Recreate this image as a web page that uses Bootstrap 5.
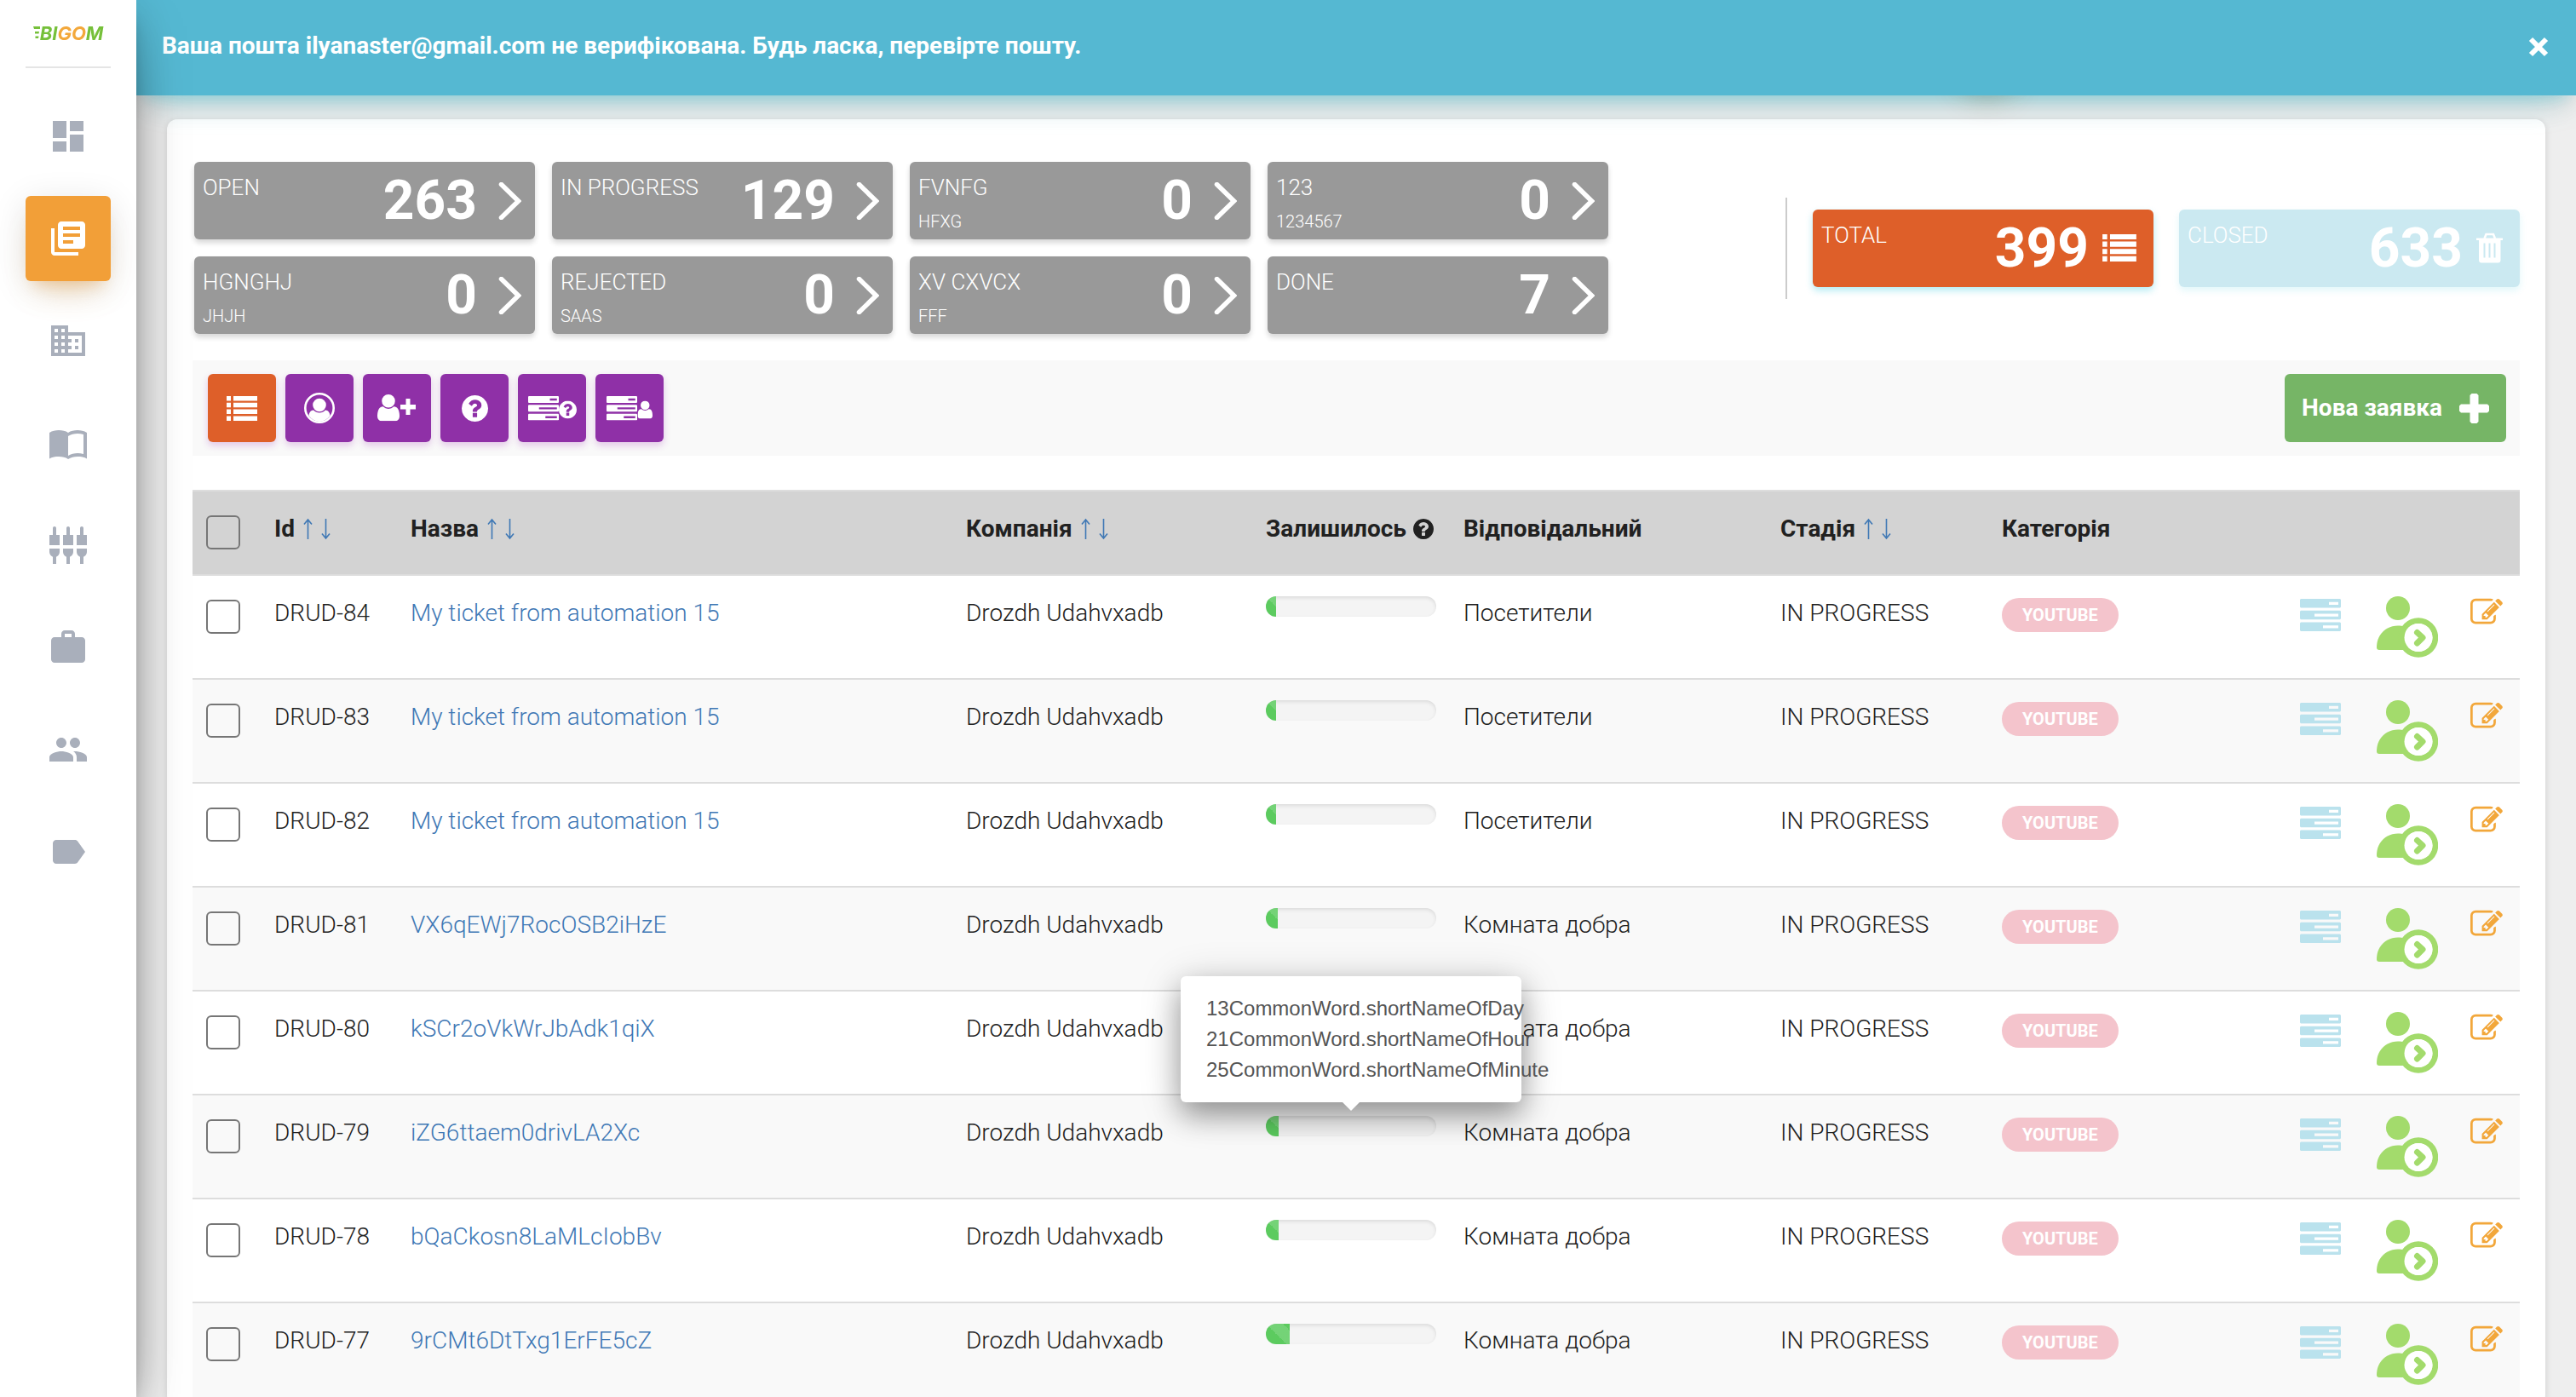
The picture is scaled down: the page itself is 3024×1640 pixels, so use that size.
<!DOCTYPE html>
<html lang="uk">
<head>
<meta charset="utf-8">
<meta name="viewport" content="width=device-width, initial-scale=1">
<title>Bigom</title>
<link href="https://cdn.jsdelivr.net/npm/bootstrap@5.3.0/dist/css/bootstrap.min.css" rel="stylesheet">
<style>
body{font-family:Roboto,"Liberation Sans",sans-serif;font-size:28px;line-height:40px;font-weight:300;color:#212121;background:#eee}
a{text-decoration:none;color:#3f78b5}
svg{display:block;flex:none;fill:currentColor}
.side-menu{width:160px;z-index:1040;background:#fff;box-shadow:0 32px 76px -24px rgba(0,0,0,.56),0 8px 50px rgba(0,0,0,.16),0 16px 20px -8px rgba(0,0,0,.26)}
.brand-link{width:100px;height:80px;border-bottom:2px solid #e5e5e5;color:#76c03a;font:italic 700 22px/22px Inter,Roboto,sans-serif}
.brand-link .warm{color:#f3a83b}
.side-list{gap:20px;padding-top:30px}
.side-list a{width:100px;height:100px;border-radius:6px;color:#a9afbb}
.side-list a.current{background:#f29f38;color:#fff;box-shadow:0 24px 40px -20px rgba(242,159,56,.4),0 8px 40px rgba(0,0,0,.12),0 14px 16px -10px rgba(242,159,56,.3)}
.page-area{margin-left:160px;padding:140px 36px 0}
.mail-note{left:160px;z-index:1030;padding:33px 30px 37px;background:#55b8d2;color:#fff;font-weight:700;line-height:42px;box-shadow:0 24px 40px -20px rgba(0,188,212,.28),0 8px 40px rgba(0,0,0,.12),0 14px 16px -10px rgba(0,188,212,.2)}
.mail-note::before{content:"";position:absolute;z-index:-1;right:656px;bottom:0;width:70px;height:60px;border-radius:30px;box-shadow:0 4px 32px rgba(90,70,20,.25)}
.note-fill{position:absolute;inset:0;z-index:-1;background:#55b8d2}
.plain-btn{border:0;background:none;padding:0;color:#fff}
.panel-card{border-radius:12px;background:#fff;padding:50px 30px 0;box-shadow:0 2px 8px rgba(0,0,0,.14)}
.stat-area{padding-left:2px}
.stat-grid{display:grid;grid-template-columns:repeat(4,400px);gap:20px}
.stat-box{width:400px;height:91px;border-radius:6px;background:#999;color:#fff;padding:0 16px 0 10px;box-shadow:0 4px 6px rgba(0,0,0,.16)}
.stat-box:hover{color:#fff}
.stat-name{padding-top:14px;gap:12px;font-size:26px;line-height:32px}
.stat-note{font-size:20px;line-height:24px}
.stat-num{font-size:64px;line-height:91px;font-weight:700;gap:16px}
.stat-box.total{background:#de5f29;box-shadow:0 4px 8px rgba(0,188,212,.3)}
.stat-box.closed{background:#cbe9f1;box-shadow:0 4px 8px rgba(0,188,212,.12)}
.sum-area{height:119px;border-left:2px solid #ccc;padding-left:30px;gap:30px}
.tool-strip{margin-top:31px;padding:16px 16px 16px 18px;background:#f9f9f9}
.tool-btns{gap:11px}
.tool-btn{width:80px;height:80px;border:0;border-radius:6px;padding:0;background:#8f30a7;color:#fff;box-shadow:0 4px 8px rgba(156,39,176,.24)}
.tool-btn.on{background:#de5f29}
.new-btn{height:80px;border:0;border-radius:6px;padding:0 20px;gap:20px;background:#76b566;color:#fff;font-weight:700}
.ticket-table{margin:40px 0 0;width:100%;table-layout:fixed;border-collapse:separate;border-spacing:0}
.ticket-table th,.ticket-table td{padding:24px 0 24px 16px;border-top:2px solid #ddd;vertical-align:top;white-space:nowrap}
.ticket-table th{background:#d3d3d3;font-weight:700}
.ticket-table tbody tr:nth-child(even) td{background:#f9f9f9}
.c-check{width:80px}.c-id{width:160px}.c-comp{width:352px}.c-left{width:232px}.c-resp{width:372px}.c-stage{width:260px}.c-cat{width:350px}.c-act{width:274px}
.tick{appearance:none;display:block;width:40px;height:40px;margin:4px 0 5px;border:2px solid #767676;border-radius:6px;background:transparent}
.sorts{gap:10px}
.tag-pill{display:inline-block;height:40px;margin-top:2px;padding:0 24px;border-radius:20px;background:#f4c4cc;color:#fff;font-size:20px;line-height:40px;font-weight:700;vertical-align:top}
.time-wrap{width:200px}
.time-bar{height:24px;border-radius:12px;background:#f4f4f4;box-shadow:inset 0 2px 4px rgba(0,0,0,.1)}
.time-bar .progress-bar{background-color:#5ccb5f;background-size:40px 40px}
.acts{gap:38px}
.hint-box{position:absolute;z-index:5;left:-100px;bottom:40px;width:400px;padding:20px 30px;border-radius:6px;background:#fff;color:#555;font:400 24px/36px "Liberation Sans",sans-serif;box-shadow:0 16px 32px rgba(0,0,0,.3),0 8px 50px rgba(0,0,0,.2)}
.hint-box::after{content:"";position:absolute;left:190px;top:100%;border:10px solid transparent;border-top-color:#fff;border-bottom:0}
</style>
<script src="https://cdn.jsdelivr.net/npm/bootstrap@5.3.0/dist/js/bootstrap.bundle.min.js"></script>
</head>
<body class="vh-100 overflow-hidden">

<svg width="0" height="0" class="position-absolute" aria-hidden="true">
  <symbol id="i-chev" viewBox="0 0 36 44"><path d="M12.500 2.500L32.500 22 12.500 41.500" fill="none" stroke="currentColor" stroke-width="5.500" stroke-linecap="round"/></symbol>
  <symbol id="i-list" viewBox="0 0 36 29"><path d="M0 0h5v5.500H0zM8 0h28v5.500H8zM0 7.800h5v5.500H0zM8 7.800h28v5.500H8zM0 15.600h5v5.500H0zM8 15.600h28v5.500H8zM0 23.400h5v5.500H0zM8 23.400h28v5.500H8z"/></symbol>
  <symbol id="i-quest" viewBox="128 128 1536 1536"><path d="M1024 1376v-192q0-14-9-23t-23-9h-192q-14 0-23 9t-9 23v192q0 14 9 23t23 9h192q14 0 23-9t9-23zm256-672q0-88-55.500-163t-138.500-116-170.500-41q-243 0-371 213-15 24 8 42l132 100q7 6 19 6 16 0 25-12 53-68 86-92 34-24 86-24 48 0 85.500 26t37.500 59q0 38-20 61t-68 45q-63 28-115.500 86.500t-52.500 125.500v36q0 14 9 23t23 9h192q14 0 23-9t9-23q0-19 21.500-49.500t54.500-49.500q32-18 49-28.500t46-35 44.500-48 28-60.500 12.500-81zm384 192q0 209-103 385.500t-279.500 279.500-385.500 103-385.500-103-279.500-279.500-103-385.500 103-385.500 279.500-279.500 385.500-103 385.500 103 279.500 279.500 103 385.500z"/></symbol>
  <symbol id="i-user" viewBox="256 128 1280 1536"><path d="M1536 1399q0 109-62.500 187t-150.500 78h-854q-88 0-150.500-78t-62.500-187q0-85 8.500-160.500t31.500-152 58.500-131 94-89 134.500-34.500q131 128 313 128t313-128q76 0 134.500 34.500t94 89 58.500 131 31.500 152 8.500 160.500zm-256-887q0 159-112.500 271.500t-271.500 112.500-271.500-112.500-112.500-271.500 112.500-271.500 271.500-112.500 271.500 112.500 112.500 271.500z"/></symbol>
  <symbol id="i-tasks" viewBox="0 0 48 38"><path fill-rule="evenodd" d="M1 0h46l1 1v8.500l-1 1H1l-1-1V1zM34 3.700v3.300h11V3.700zM1 13.800h46l1 1v8.500l-1 1H1l-1-1v-8.500zM17 17.500v3.300h28v-3.300zM1 27.500h46l1 1V37l-1 1H1l-1-1v-8.500zM27 31.200v3.300h18v-3.300z"/></symbol>
  <symbol id="i-assign" viewBox="0 0 72 72"><circle cx="25" cy="14" r="14"/><path d="M3 63Q0 63 0 60C0 45 11 34.500 25 34.500c3 0 5 .3 7.500 1L38 60l-4 3z"/><path fill-rule="evenodd" d="M49 25.300a23.200 23.200 0 1 1 0 46.400 23.200 23.200 0 0 1 0-46.400zm0 6.700a16.500 16.500 0 1 0 0 33 16.500 16.500 0 0 0 0-33z"/><circle cx="49" cy="48.500" r="16.500" fill="#fff"/><path d="M47.500 42.500l6.500 6-6.500 6.500" fill="none" stroke="currentColor" stroke-width="7" stroke-linecap="round" stroke-linejoin="round"/></symbol>
  <symbol id="i-edit" viewBox="0 0 1792 1792"><path d="M888 1184l116-116-152-152-116 116v56h96v96h56zm440-720q-16-16-33 1l-350 350q-17 17-1 33t33-1l350-350q17-17 1-33zm80 594v190q0 119-84.500 203.500t-203.500 84.500h-832q-119 0-203.500-84.500t-84.500-203.500v-832q0-119 84.500-203.500t203.500-84.500h832q63 0 117 25 15 7 18 23 3 17-9 29l-49 49q-14 14-32 8-23-6-45-6h-832q-66 0-113 47t-47 113v832q0 66 47 113t113 47h832q66 0 113-47t47-113v-126q0-13 9-22l64-64q15-15 35-7t20 29zm-96-738l288 288-672 672h-288v-288zm444 132l-92 92-288-288 92-92q28-28 68-28t68 28l152 152q28 28 28 68t-28 68z"/></symbol>
  <symbol id="i-up" viewBox="0 0 11 26"><path d="M5.500 25V2M1 7.500L5.500 2 10 7.500" fill="none" stroke="currentColor" stroke-width="1.600"/></symbol>
  <symbol id="i-down" viewBox="0 0 11 26"><path d="M5.500 1v23M1 18.500L5.500 24 10 18.500" fill="none" stroke="currentColor" stroke-width="1.600"/></symbol>
</svg>

<aside class="side-menu position-fixed top-0 start-0 vh-100 d-flex flex-column align-items-center">
  <a href="#" class="brand-link d-flex align-items-center justify-content-center" aria-label="Bigom">
    <svg width="8" height="18" viewBox="0 0 8 18"><path d="M0 1h10l-1 3H1zM2 7h5l-.5 2.500H2zM2.500 12.500h4L6 15H2.500z"/></svg>
    <span>B<span>I</span><span class="warm">GO</span>M</span>
  </a>
  <nav class="side-list d-flex flex-column">
    <a href="#" class="d-flex align-items-center justify-content-center" aria-label="Панель"><svg width="48" height="48" viewBox="0 0 24 24"><path d="M3 13h8V3H3v10zm0 8h8v-6H3v6zm10 0h8V11h-8v10zm0-18v6h8V3h-8z"/></svg></a>
    <a href="#" class="current d-flex align-items-center justify-content-center" aria-label="Заявки"><svg width="48" height="48" viewBox="0 0 24 24"><path d="M4 6H2v14c0 1.100.9 2 2 2h14v-2H4V6zm16-4H8c-1.100 0-2 .9-2 2v12c0 1.100.9 2 2 2h12c1.100 0 2-.9 2-2V4c0-1.100-.9-2-2-2zm-1 9H9V9h10v2zm-4 4H9v-2h6v2zm4-8H9V5h10v2z"/></svg></a>
    <a href="#" class="d-flex align-items-center justify-content-center" aria-label="Компанії"><svg width="48" height="48" viewBox="0 0 24 24"><path d="M12 7V3H2v18h20V7H12zM6 19H4v-2h2v2zm0-4H4v-2h2v2zm0-4H4V9h2v2zm0-4H4V5h2v2zm4 12H8v-2h2v2zm0-4H8v-2h2v2zm0-4H8V9h2v2zm0-4H8V5h2v2zm10 12h-8v-2h2v-2h-2v-2h2v-2h-2V9h8v10zm-2-8h-2v2h2v-2zm0 4h-2v2h2v-2z"/></svg></a>
    <a href="#" class="d-flex align-items-center justify-content-center" aria-label="База знань"><svg width="48" height="48" viewBox="0 0 24 24"><path fill-rule="evenodd" d="M12 6C10.500 4.900 8.500 4.500 6.500 4.500S2.700 4.900 1 6v15.200C2.500 20.300 4.500 20 6.500 20s4 .4 5.500 1.500c1.500-1 3.500-1.500 5.500-1.500s4 .3 5.500 1.200V6c-1.700-1.100-3.500-1.500-5.500-1.500S13.500 4.900 12 6zm0 2c1.400-1 3.600-1.500 5.500-1.500 1.200 0 2.400.15 3.500.5v11.500c-1.100-.35-2.300-.5-3.500-.5-1.700 0-4.150.65-5.500 1.500z"/></svg></a>
    <a href="#" class="d-flex align-items-center justify-content-center" aria-label="Інтеграції"><svg width="48" height="48" viewBox="0 0 24 24"><path d="M5 2c0-.55-.45-1-1-1s-1 .45-1 1v4H1v6h6V6H5V2zm4 14c0 1.300.84 2.400 2 2.820V23h2v-4.180c1.160-.41 2-1.510 2-2.820v-2H9v2zm-8 0c0 1.300.84 2.400 2 2.820V23h2v-4.180C6.160 18.400 7 17.300 7 16v-2H1v2zM21 6V2c0-.55-.45-1-1-1s-1 .45-1 1v4h-2v6h6V6h-2zm-8-4c0-.55-.45-1-1-1s-1 .45-1 1v4H9v6h6V6h-2V2zm4 14c0 1.300.84 2.400 2 2.820V23h2v-4.180c1.160-.41 2-1.510 2-2.820v-2h-6v2z"/></svg></a>
    <a href="#" class="d-flex align-items-center justify-content-center" aria-label="Робота"><svg width="48" height="48" viewBox="0 0 24 24"><path d="M20 6h-4V4c0-1.110-.89-2-2-2h-4c-1.110 0-2 .89-2 2v2H4c-1.110 0-1.990.89-1.990 2L2 19c0 1.110.89 2 2 2h16c1.110 0 2-.89 2-2V8c0-1.110-.89-2-2-2zm-6 0h-4V4h4v2z"/></svg></a>
    <a href="#" class="d-flex align-items-center justify-content-center" aria-label="Користувачі"><svg width="48" height="48" viewBox="0 0 24 24"><path d="M16 11c1.660 0 2.990-1.340 2.990-3S17.660 5 16 5c-1.660 0-3 1.340-3 3s1.340 3 3 3zm-8 0c1.660 0 2.990-1.340 2.990-3S9.660 5 8 5C6.340 5 5 6.340 5 8s1.340 3 3 3zm0 2c-2.330 0-7 1.170-7 3.500V19h14v-2.500c0-2.330-4.670-3.500-7-3.500zm8 0c-.29 0-.62.02-.97.05 1.160.84 1.970 1.970 1.970 3.450V19h6v-2.500c0-2.330-4.670-3.500-7-3.500z"/></svg></a>
    <a href="#" class="d-flex align-items-center justify-content-center" aria-label="Мітки"><svg width="48" height="48" viewBox="0 0 24 24"><path d="M17.630 5.840C17.270 5.330 16.670 5 16 5L5 5.010C3.900 5.010 3 5.900 3 7v10c0 1.100.9 1.990 2 1.990L16 19c.67 0 1.270-.33 1.630-.84L22 12l-4.370-6.160z"/></svg></a>
  </nav>
</aside>

<div class="mail-note position-fixed top-0 end-0 d-flex justify-content-between align-items-center" role="alert">
  <div class="note-fill"></div>
  <span>Ваша пошта ilyanaster@gmail.com не верифікована. Будь ласка, перевірте пошту.</span>
  <button type="button" class="plain-btn" aria-label="Закрити"><svg width="28" height="28" viewBox="0 0 28 28"><path d="M5 6l18 18M23 6L5 24" stroke="#fff" stroke-width="6"/></svg></button>
</div>

<main class="page-area">
  <section class="panel-card">
    <div class="stat-area d-flex justify-content-between align-items-center">
      <div class="stat-grid">
        <a href="#" class="stat-box d-flex justify-content-between"><span class="stat-name d-flex flex-column"><span>OPEN</span></span><span class="stat-num d-flex align-items-center">263 <svg width="36" height="44"><use href="#i-chev"/></svg></span></a>
        <a href="#" class="stat-box d-flex justify-content-between"><span class="stat-name d-flex flex-column"><span>IN PROGRESS</span></span><span class="stat-num d-flex align-items-center">129 <svg width="36" height="44"><use href="#i-chev"/></svg></span></a>
        <a href="#" class="stat-box d-flex justify-content-between"><span class="stat-name d-flex flex-column"><span>FVNFG</span><span class="stat-note">HFXG</span></span><span class="stat-num d-flex align-items-center">0 <svg width="36" height="44"><use href="#i-chev"/></svg></span></a>
        <a href="#" class="stat-box d-flex justify-content-between"><span class="stat-name d-flex flex-column"><span>123</span><span class="stat-note">1234567</span></span><span class="stat-num d-flex align-items-center">0 <svg width="36" height="44"><use href="#i-chev"/></svg></span></a>
        <a href="#" class="stat-box d-flex justify-content-between"><span class="stat-name d-flex flex-column"><span>HGNGHJ</span><span class="stat-note">JHJH</span></span><span class="stat-num d-flex align-items-center">0 <svg width="36" height="44"><use href="#i-chev"/></svg></span></a>
        <a href="#" class="stat-box d-flex justify-content-between"><span class="stat-name d-flex flex-column"><span>REJECTED</span><span class="stat-note">SAAS</span></span><span class="stat-num d-flex align-items-center">0 <svg width="36" height="44"><use href="#i-chev"/></svg></span></a>
        <a href="#" class="stat-box d-flex justify-content-between"><span class="stat-name d-flex flex-column"><span>XV CXVCX</span><span class="stat-note">FFF</span></span><span class="stat-num d-flex align-items-center">0 <svg width="36" height="44"><use href="#i-chev"/></svg></span></a>
        <a href="#" class="stat-box d-flex justify-content-between"><span class="stat-name d-flex flex-column"><span>DONE</span></span><span class="stat-num d-flex align-items-center">7 <svg width="36" height="44"><use href="#i-chev"/></svg></span></a>
      </div>
      <div class="sum-area d-flex align-items-center">
        <a href="#" class="stat-box total d-flex justify-content-between"><span class="stat-name d-flex flex-column"><span>TOTAL</span></span><span class="stat-num d-flex align-items-center">399 <svg width="44" height="32"><use href="#i-list" width="40" height="32"/></svg></span></a>
        <a href="#" class="stat-box closed d-flex justify-content-between"><span class="stat-name d-flex flex-column"><span>CLOSED</span></span><span class="stat-num d-flex align-items-center">633 <svg width="35" height="36" viewBox="0 0 35 36"><path d="M0 6.500h31V9H0z"/><path d="M9.500 7l2-5h8.500l2 5" fill="none" stroke="currentColor" stroke-width="2.500"/><path fill-rule="evenodd" d="M3 8h25.500v24q0 3.500-3 3.500H6q-3 0-3-3.500zM8.500 12.500v17h2v-17zM14.500 12.500v17h2v-17zM20.500 12.500v17h2v-17z"/></svg></span></a>
      </div>
    </div>

    <div class="tool-strip d-flex justify-content-between">
      <div class="tool-btns d-flex">
        <button type="button" class="tool-btn on d-flex align-items-center justify-content-center" aria-label="Всі"><svg width="36" height="29"><use href="#i-list"/></svg></button>
        <button type="button" class="tool-btn d-flex align-items-center justify-content-center" aria-label="Мої"><svg width="36" height="36" viewBox="0 0 36 36"><circle cx="18" cy="18" r="16.700" fill="none" stroke="currentColor" stroke-width="2.600"/><circle cx="18" cy="14.500" r="7.800"/><path d="M5.500 27C6 22.500 8.500 20.500 11 20.500c2 2 4 3 7 3s5-1 7-3c2.500 0 5 2 5.500 6.500Q25 34 18 34T5.500 27z"/></svg></button>
        <button type="button" class="tool-btn d-flex align-items-center justify-content-center" aria-label="Додати"><svg width="46" height="32" viewBox="0 0 46 32"><use href="#i-user" width="26" height="31.200"/><path d="M33.500 5h5v7H45v5.500h-6.500V24h-5v-6.500H27V12h6.500z"/></svg></button>
        <button type="button" class="tool-btn d-flex align-items-center justify-content-center" aria-label="Без відповідального"><svg width="31" height="31"><use href="#i-quest"/></svg></button>
        <button type="button" class="tool-btn d-flex align-items-center justify-content-center" aria-label="Задачі без відповідального"><svg width="57" height="29" viewBox="0 0 57 29"><use href="#i-tasks" width="36" height="28.500"/><use href="#i-quest" x="36" y="5.500" width="21" height="21"/></svg></button>
        <button type="button" class="tool-btn d-flex align-items-center justify-content-center" aria-label="Задачі користувача"><svg width="54" height="29" viewBox="0 0 54 29"><use href="#i-tasks" width="36" height="28.500"/><use href="#i-user" x="36.500" y="5.500" width="17.500" height="21"/></svg></button>
      </div>
      <button type="button" class="new-btn d-flex align-items-center"><span>Нова заявка</span><svg width="35" height="35" viewBox="0 0 35 35"><path d="M14.500 0h6l2 2v10.500H33l2 2v6l-2 2H22.500V33l-2 2h-6l-2-2V22.500H2l-2-2v-6l2-2h10.500V2z"/></svg></button>
    </div>

    <table class="ticket-table">
      <colgroup><col class="c-check"><col class="c-id"><col><col class="c-comp"><col class="c-left"><col class="c-resp"><col class="c-stage"><col class="c-cat"><col class="c-act"></colgroup>
      <thead>
        <tr>
          <th><input type="checkbox" class="tick" aria-label="Обрати всі"></th>
          <th><span class="d-flex align-items-center sorts">Id <a href="#" aria-label="Id за зростанням"><svg width="11" height="26"><use href="#i-up"/></svg></a><a href="#" aria-label="Id за спаданням"><svg width="11" height="26"><use href="#i-down"/></svg></a></span></th>
          <th><span class="d-flex align-items-center sorts">Назва <a href="#" aria-label="Назва за зростанням"><svg width="11" height="26"><use href="#i-up"/></svg></a><a href="#" aria-label="Назва за спаданням"><svg width="11" height="26"><use href="#i-down"/></svg></a></span></th>
          <th><span class="d-flex align-items-center sorts">Компанія <a href="#" aria-label="Компанія за зростанням"><svg width="11" height="26"><use href="#i-up"/></svg></a><a href="#" aria-label="Компанія за спаданням"><svg width="11" height="26"><use href="#i-down"/></svg></a></span></th>
          <th><span class="d-flex align-items-center gap-2">Залишилось <svg width="24" height="24"><use href="#i-quest"/></svg></span></th>
          <th>Відповідальний</th>
          <th><span class="d-flex align-items-center sorts">Стадія <a href="#" aria-label="Стадія за зростанням"><svg width="11" height="26"><use href="#i-up"/></svg></a><a href="#" aria-label="Стадія за спаданням"><svg width="11" height="26"><use href="#i-down"/></svg></a></span></th>
          <th>Категорія</th>
          <th></th>
        </tr>
      </thead>
      <tbody id="tickets"></tbody>
    </table>
  </section>
</main>

<script>
const tickets = [
  [84, 'My ticket from automation 15', 6, 'Посетители'],
  [83, 'My ticket from automation 15', 6, 'Посетители'],
  [82, 'My ticket from automation 15', 6, 'Посетители'],
  [81, 'VX6qEWj7RocOSB2iHzE', 7, 'Комната добра'],
  [80, 'kSCr2oVkWrJbAdk1qiX', 7, 'Комната добра'],
  [79, 'iZG6ttaem0drivLA2Xc', 7.5, 'Комната добра', ['13CommonWord.shortNameOfDay', '21CommonWord.shortNameOfHour', '25CommonWord.shortNameOfMinute']],
  [78, 'bQaCkosn8LaMLcIobBv', 7.5, 'Комната добра'],
  [77, '9rCMt6DtTxg1ErFE5cZ', 14, 'Комната добра']
];
document.getElementById('tickets').innerHTML = tickets.map(([id, name, done, who, hint]) => `
  <tr>
    <td><input type="checkbox" class="tick" aria-label="DRUD-${id}"></td>
    <td>DRUD-${id}</td>
    <td><a href="#">${name}</a></td>
    <td>Drozdh Udahvxadb</td>
    <td><div class="time-wrap position-relative">
      <div class="progress time-bar"><div class="progress-bar progress-bar-striped" style="width:${done}%"></div></div>
      ${hint ? `<div class="hint-box" role="tooltip">${hint.map(t => `<div>${t}</div>`).join('')}</div>` : ''}
    </div></td>
    <td>${who}</td>
    <td>IN PROGRESS</td>
    <td><span class="tag-pill">YOUTUBE</span></td>
    <td><div class="acts d-flex align-items-start">
      <button type="button" class="plain-btn" aria-label="Задачі"><svg width="52" height="42" viewBox="0 -3 52 42" color="#bae2ed"><use href="#i-tasks" width="48" height="38"/></svg></button>
      <button type="button" class="plain-btn" aria-label="Призначити"><svg width="72" height="72" color="#a3db6c"><use href="#i-assign"/></svg></button>
      <button type="button" class="plain-btn" aria-label="Редагувати"><svg width="38" height="38" color="#f2a73b"><use href="#i-edit"/></svg></button>
    </div></td>
  </tr>`).join('');
</script>
</body>
</html>
